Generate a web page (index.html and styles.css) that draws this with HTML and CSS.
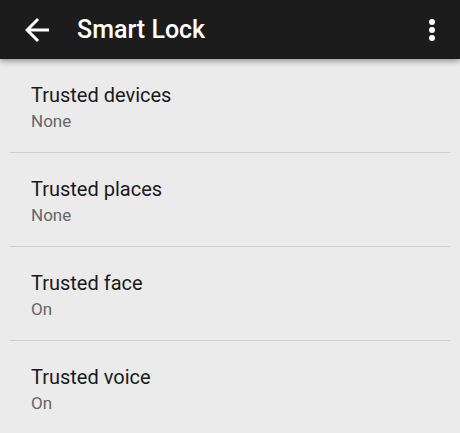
FILE: index.html
```html
<!DOCTYPE html>
<html>
<head>
<title>Smart Lock</title>
<link rel="stylesheet" href="styles.css">
</head>
<body>
<div class="toolbar">
	<svg class="back" width="36" height="36" viewBox="0 0 24 24"><path fill="#fff" d="M20 11H7.83l5.59-5.59L12 4l-8 8 8 8 1.41-1.41L7.83 13H20v-2z"/></svg>
	<h1>Smart Lock</h1>
	<div class="menu"><span></span><span></span><span></span></div>
</div>
<ul class="prefs">
	<li><div class="title">Trusted devices</div><div class="summary">None</div></li>
	<li><div class="title">Trusted places</div><div class="summary">None</div></li>
	<li><div class="title">Trusted face</div><div class="summary">On</div></li>
	<li><div class="title">Trusted voice</div><div class="summary">On</div></li>
</ul>
</body>
</html>
```

FILE: styles.css
```css
body { margin: 0; background: #ebebeb; font-family: Roboto, "Noto Sans", sans-serif; overflow: hidden; }
.toolbar { position: relative; z-index: 1; height: 59px; background: #1c1c1c; display: flex; align-items: center; box-shadow: 0 2px 6px rgba(0, 0, 0, 0.4); }
.back { margin-left: 19px; flex: none; }
h1 { margin: 0 0 0 22px; flex: 1; color: #fff; font-size: 25px; font-weight: 500; line-height: 30px; }
.menu { display: flex; flex-direction: column; gap: 2px; margin-right: 25px; }
.menu span { width: 6px; height: 6px; border-radius: 50%; background: #fff; }
.prefs { list-style: none; margin: 0; padding: 0; }
.prefs li { margin: 0 10px; padding: 24px 21px 21px; border-bottom: 1px solid #cfcfcf; }
.title { color: #1a1a1a; font-size: 20px; line-height: 24px; }
.summary { margin-top: 4px; color: #666; font-size: 17px; line-height: 20px; }
```
